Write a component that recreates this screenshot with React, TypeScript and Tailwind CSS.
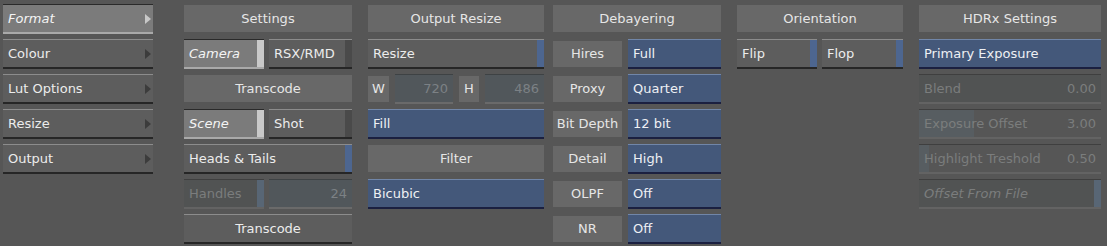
import { ReactNode } from 'react'

type Variant = 'normal' | 'selected' | 'blue' | 'field' | 'disabled'

const base = 'h-[30px] flex items-center text-[13px] leading-none whitespace-nowrap'

function Header({ children, className = '' }: { children: ReactNode; className?: string }) {
  return (
    <div className={`h-[30px] pt-[1px] pb-[2px] ${className}`}>
      <div className="h-full bg-[#686868] flex items-center justify-center text-[13px] text-[#e6e6e6]">
        {children}
      </div>
    </div>
  )
}

function Label({ children, className = '' }: { children: ReactNode; className?: string }) {
  return (
    <div className={`h-[30px] py-[2px] ${className}`}>
      <div className="h-full bg-[#686868] flex items-center justify-center text-[13px] text-[#e6e6e6]">
        {children}
      </div>
    </div>
  )
}

function Btn({
  children,
  variant = 'normal',
  strip,
  italic,
  arrow,
  className = ''
}: {
  children?: ReactNode
  variant?: Variant
  strip?: 'light' | 'dark' | 'blue' | 'fadeblue'
  italic?: boolean
  arrow?: 'light' | 'dark'
  className?: string
}) {
  const skin: Record<Variant, string> = {
    normal: 'bg-[#5d5d5d] border-t border-t-[#8c8c8c] border-b-2 border-b-[#262626] text-[#ececec]',
    selected: 'bg-[#7b7b7b] border-t border-t-[#2a2a2a] border-b-2 border-b-[#a9a9a9] text-[#f4f4f4]',
    blue: 'bg-[#44587a] border-t border-t-[#7186a8] border-b-2 border-b-[#1b2040] text-[#eef0f4]',
    field: 'bg-[#51575b] border-t border-t-[#3e4244] border-b-2 border-b-[#6a6a6a] text-[#7c8185]',
    disabled: 'bg-[#515353] border-t border-t-[#3f3f3f] border-b-2 border-b-[#636363] text-[#7b7d7d]'
  }
  const stripColor = {
    light: 'bg-[#c9c9c9]',
    dark: 'bg-[#4a4a4a]',
    blue: 'bg-[#4d6690]',
    fadeblue: 'bg-[#586675]'
  }
  return (
    <div className={`${base} ${skin[variant]} relative ${className}`}>
      <span className={`flex-1 px-[5px] ${italic ? 'italic' : ''}`}>{children}</span>
      {strip && <div className={`w-[7px] self-stretch ${stripColor[strip]}`} />}
      {arrow && (
        <svg width="6" height="10" viewBox="0 0 6 10" className="mr-[2px]">
          <polygon points="0,0 6,5 0,10" fill={arrow === 'light' ? '#c8c8c8' : '#3c3c3c'} />
        </svg>
      )}
    </div>
  )
}

export default function App() {
  return (
    <div
      className="w-[1107px] h-[246px] bg-[#565656] flex pt-[4px] pl-[3px] overflow-hidden"
      style={{ fontFamily: '"DejaVu Sans", Verdana, sans-serif' }}
    >
      {/* Menu */}
      <div className="w-[150px] flex flex-col gap-[5px]">
        <Btn variant="selected" italic arrow="light">Format</Btn>
        <Btn arrow="dark">Colour</Btn>
        <Btn arrow="dark">Lut Options</Btn>
        <Btn arrow="dark">Resize</Btn>
        <Btn arrow="dark">Output</Btn>
      </div>

      {/* Settings */}
      <div className="w-[168px] ml-[31px] flex flex-col gap-[5px]">
        <Header>Settings</Header>
        <div className="flex gap-[5px]">
          <Btn variant="selected" italic strip="light" className="w-[80px]">Camera</Btn>
          <Btn strip="dark" className="flex-1">RSX/RMD</Btn>
        </div>
        <Header>Transcode</Header>
        <div className="flex gap-[5px]">
          <Btn variant="selected" italic strip="light" className="w-[80px]">Scene</Btn>
          <Btn strip="dark" className="flex-1">Shot</Btn>
        </div>
        <Btn strip="blue">Heads &amp; Tails</Btn>
        <div className="flex gap-[5px]">
          <Btn variant="disabled" strip="fadeblue" className="w-[80px]">Handles</Btn>
          <Btn variant="field" className="flex-1 text-right">24</Btn>
        </div>
        <Btn className="text-center">Transcode</Btn>
      </div>

      {/* Output Resize */}
      <div className="w-[176px] ml-[16px] flex flex-col gap-[5px]">
        <Header>Output Resize</Header>
        <Btn strip="blue">Resize</Btn>
        <div className="flex gap-[6px]">
          <Label className="w-[21px]">W</Label>
          <Btn variant="field" className="w-[58px] text-right">720</Btn>
          <Label className="w-[20px]">H</Label>
          <Btn variant="field" className="flex-1 text-right">486</Btn>
        </div>
        <Btn variant="blue">Fill</Btn>
        <Header>Filter</Header>
        <Btn variant="blue">Bicubic</Btn>
      </div>

      {/* Debayering */}
      <div className="w-[168px] ml-[9px] flex flex-col gap-[5px]">
        <Header>Debayering</Header>
        {[
          ['Hires', 'Full'],
          ['Proxy', 'Quarter'],
          ['Bit Depth', '12 bit'],
          ['Detail', 'High'],
          ['OLPF', 'Off'],
          ['NR', 'Off']
        ].map(([k, v]) => (
          <div key={k} className="flex gap-[6px]">
            <Label className="w-[69px]">{k}</Label>
            <Btn variant="blue" className="flex-1">{v}</Btn>
          </div>
        ))}
      </div>

      {/* Orientation */}
      <div className="w-[166px] ml-[16px] flex flex-col gap-[5px]">
        <Header>Orientation</Header>
        <div className="flex gap-[5px]">
          <Btn strip="blue" className="w-[80px]">Flip</Btn>
          <Btn strip="blue" className="flex-1">Flop</Btn>
        </div>
      </div>

      {/* HDRx */}
      <div className="w-[182px] ml-[16px] flex flex-col gap-[5px]">
        <Header>HDRx Settings</Header>
        <Btn variant="blue">Primary Exposure</Btn>
        <Btn variant="disabled">
          <span className="flex justify-between"><span>Blend</span><span>0.00</span></span>
        </Btn>
        <div className="relative">
          <div className="absolute left-0 top-[1px] bottom-[2px] w-[55px] bg-[#575d61]" />
          <Btn variant="disabled" className="bg-transparent">
            <span className="relative flex justify-between"><span>Exposure Offset</span><span>3.00</span></span>
          </Btn>
        </div>
        <div className="relative">
          <div className="absolute left-0 top-[1px] bottom-[2px] w-[10px] bg-[#575d61]" />
          <Btn variant="disabled" className="bg-transparent">
            <span className="relative flex justify-between"><span>Highlight Treshold</span><span>0.50</span></span>
          </Btn>
        </div>
        <Btn variant="disabled" italic strip="fadeblue" className="bg-[#5a5a5a]">Offset From File</Btn>
      </div>
    </div>
  )
}
